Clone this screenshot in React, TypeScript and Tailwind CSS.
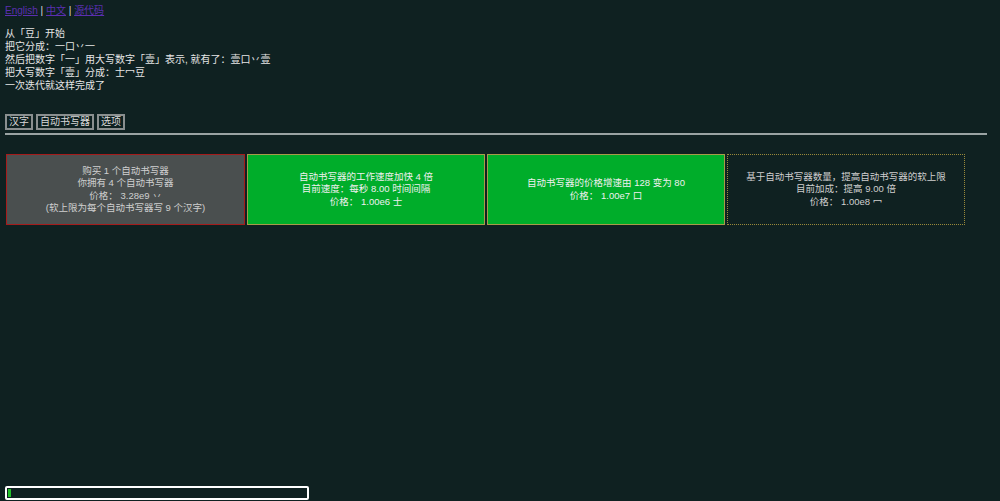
import React from "react";

const font = { fontFamily: '"Liberation Sans", "Noto Sans CJK SC", sans-serif' };

export default function App() {
  return (
    <div
      className="flex h-[501px] w-[1000px] flex-col overflow-hidden bg-[#0f2121] pl-[5px] text-[10px] leading-[13px] text-[#e6e6e6]"
      style={font}
    >
      <div className="mt-[5px] text-[10px] leading-[12px]">
        <a href="#" className="text-[#5b2fb0] underline">English</a>
        <span className="text-[#ddd]"> | </span>
        <a href="#" className="text-[#5b2fb0] underline">中文</a>
        <span className="text-[#ddd]"> | </span>
        <a href="#" className="text-[#5b2fb0] underline">源代码</a>
      </div>
      <div className="mt-[10px] flex flex-col">
        <div>从「豆」开始</div>
        <div>把它分成：一口丷一</div>
        <div>然后把数字「一」用大写数字「壹」表示, 就有了：壹口丷壹</div>
        <div>把大写数字「壹」分成：士冖豆</div>
        <div>一次迭代就这样完成了</div>
      </div>
      <div className="mt-[22px] flex gap-[3px]">
        {["汉字", "自动书写器", "选项"].map((t) => (
          <button
            key={t}
            className="h-[16px] border-2 border-[#8a8f8f] bg-transparent px-[2px] text-[10px] leading-[12px] text-[#d8d8d8]"
            style={font}
          >
            {t}
          </button>
        ))}
      </div>
      <div className="mt-[3px] h-[2px] w-[982px] bg-[#9aa3a3]" />
      <div className="mt-[19px] flex gap-[2px] pl-[1px] text-[9.5px] leading-[12.5px]">
        <div className="flex h-[71px] w-[239px] flex-col items-center justify-center border border-[#a51c1c] bg-[#4a4f4f] text-center text-[#cfcfcf]">
          <div>购买 1 个自动书写器</div>
          <div>你拥有 4 个自动书写器</div>
          <div>价格： 3.28e9 丷</div>
          <div>(软上限为每个自动书写器写 9 个汉字)</div>
        </div>
        <div className="flex h-[71px] w-[238px] flex-col items-center justify-center border border-[#a89a4a] bg-[#00ad2a] text-center text-[#f0f0f0]">
          <div>自动书写器的工作速度加快 4 倍</div>
          <div>目前速度：每秒 8.00 时间间隔</div>
          <div>价格： 1.00e6 士</div>
        </div>
        <div className="flex h-[71px] w-[238px] flex-col items-center justify-center border border-[#a89a4a] bg-[#00ad2a] text-center text-[#f0f0f0]">
          <div>自动书写器的价格增速由 128 变为 80</div>
          <div>价格： 1.00e7 口</div>
        </div>
        <div className="flex h-[71px] w-[238px] flex-col items-center justify-center border border-dotted border-[#9a8a3a] bg-transparent text-center text-[#cfcfcf]">
          <div>基于自动书写器数量，提高自动书写器的软上限</div>
          <div>目前加成：提高 9.00 倍</div>
          <div>价格： 1.00e8 冖</div>
        </div>
      </div>
      <div className="mt-auto mb-[1px] flex h-[14px] w-[304px] items-stretch rounded-[2px] border-2 border-white bg-[#0f2121] p-[1px]">
        <div className="w-[3px] bg-[#22c02a]" />
      </div>
    </div>
  );
}
